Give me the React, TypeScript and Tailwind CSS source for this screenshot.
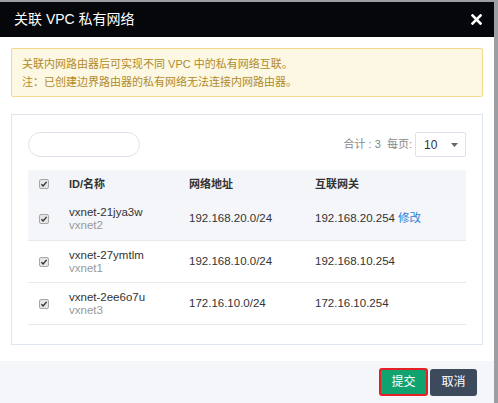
import { Fragment } from 'react'

type Row = { id: string; name: string; cidr: string; gateway: string; editable?: boolean }

const ROWS: Row[] = [
  { id: 'vxnet-21jya3w', name: 'vxnet2', cidr: '192.168.20.0/24', gateway: '192.168.20.254', editable: true },
  { id: 'vxnet-27ymtlm', name: 'vxnet1', cidr: '192.168.10.0/24', gateway: '192.168.10.254' },
  { id: 'vxnet-2ee6o7u', name: 'vxnet3', cidr: '172.16.10.0/24', gateway: '172.16.10.254' },
]

function Check() {
  return (
    <span className="flex h-[10px] w-[10px] items-center justify-center rounded-[2px] border border-[#a8a8a8] bg-[#e6e6e6]">
      <svg width="8" height="8" viewBox="0 0 8 8">
        <path d="M1.4 4.2 L3.1 5.9 L6.6 1.9" fill="none" stroke="#333" strokeWidth="1.4" />
      </svg>
    </span>
  )
}

export default function App() {
  return (
    <div className="h-[403px] w-[498px] overflow-hidden bg-[#9b9ea3] pr-[4px] pt-[2px] font-['Liberation_Sans','Noto_Sans_CJK_SC',sans-serif]">
      <div className="flex h-[401px] w-[494px] flex-col bg-white">
        <div className="flex h-[35px] shrink-0 items-center justify-between bg-[#05070b] pl-[14px] pr-[12px]">
          <span className="text-[14px] text-white">关联 VPC 私有网络</span>
          <svg width="11" height="11" viewBox="0 0 11 11">
            <path d="M1.5 1.5 L9.5 9.5 M9.5 1.5 L1.5 9.5" stroke="#fff" strokeWidth="2.6" strokeLinecap="square" />
          </svg>
        </div>

        <div className="px-[11px] pt-[11px]">
          <div className="h-[49px] rounded-[2px] border border-[#f4d98b] bg-[#fdf8e4] px-[10px] pt-[6px] text-[11px] leading-[18px] text-[#b08a2a]">
            <p>关联内网路由器后可实现不同 VPC 中的私有网络互联。</p>
            <p>注：已创建边界路由器的私有网络无法连接内网路由器。</p>
          </div>

          <div className="mt-[17px] h-[231px] border border-[#dfe5ec] px-[16px] pt-[17px]">
            <div className="flex h-[25px] items-center justify-between">
              <div className="h-[25px] w-[112px] rounded-full border border-[#dce3ea]" />
              <div className="flex items-center">
                <span className="mr-[3px] text-[11px] text-[#888]">合计 : 3&nbsp;&nbsp;每页:</span>
                <div className="flex h-[25px] w-[51px] items-center justify-between rounded-[2px] border border-[#dce3ea] pl-[8px] pr-[7px]">
                  <span className="text-[12px] text-[#333]">10</span>
                  <svg width="7" height="4" viewBox="0 0 7 4">
                    <path d="M0 0 H7 L3.5 4 Z" fill="#666" />
                  </svg>
                </div>
              </div>
            </div>

            <div className="mt-[13px] grid grid-cols-[41px_120px_126px_1fr] text-[11px]">
              <div className="flex h-[28px] items-center bg-[#f3f5f8] pl-[11px]">
                <Check />
              </div>
              <div className="flex h-[28px] items-center bg-[#f3f5f8] font-bold text-[#333]">ID/名称</div>
              <div className="flex h-[28px] items-center bg-[#f3f5f8] font-bold text-[#333]">网络地址</div>
              <div className="flex h-[28px] items-center bg-[#f3f5f8] font-bold text-[#333]">互联网关</div>

              {ROWS.map((r, i) => {
                const bg = i === 0 ? 'bg-[#f4f6f9]' : 'bg-white'
                const h = i === 0 ? 'h-[43px]' : 'h-[42px]'
                return (
                  <Fragment key={r.id}>
                    <div className={`flex ${h} items-center border-b border-[#e6eaef] pl-[11px] ${bg}`}>
                      <Check />
                    </div>
                    <div className={`flex ${h} flex-col justify-center border-b border-[#e6eaef] text-[11.5px] leading-[13px] ${bg}`}>
                      <span className="text-[#333]">{r.id}</span>
                      <span className="text-[#999]">{r.name}</span>
                    </div>
                    <div className={`flex ${h} items-center border-b border-[#e6eaef] text-[11.5px] text-[#333] ${bg}`}>{r.cidr}</div>
                    <div className={`flex ${h} items-center border-b border-[#e6eaef] text-[11.5px] text-[#333] ${bg}`}>
                      {r.gateway}
                      {r.editable ? <span className="ml-[3px] text-[#2d7fd8]">修改</span> : null}
                    </div>
                  </Fragment>
                )
              })}
            </div>
          </div>
        </div>

        <div className="mt-auto flex h-[42px] shrink-0 items-center justify-end gap-[2px] bg-[#f4f6fa] pr-[17px]">
          <button className="h-[28px] w-[49px] rounded-[3px] border-2 border-[#e61e25] bg-[#10a36f] text-[12px] text-white">
            提交
          </button>
          <button className="h-[27px] w-[47px] rounded-[3px] bg-[#3d4a5b] text-[12px] text-white">取消</button>
        </div>
      </div>
    </div>
  )
}
